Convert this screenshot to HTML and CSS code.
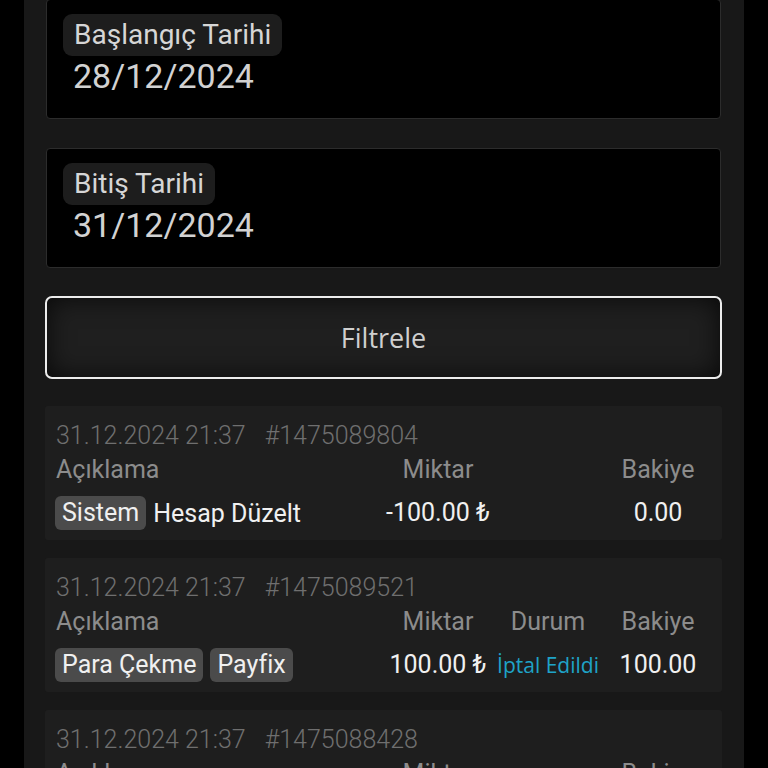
FILE: index.html
```html
<!DOCTYPE html>
<html lang="tr">
<head>
    <meta charset="UTF-8">
    <meta name="viewport" content="width=device-width, initial-scale=1.0">
    <title>Hesap Hareketleri</title>
    <link rel="stylesheet" href="styles.css">
</head>
<body>
    <div class="panel">
        <div class="date-box first">
            <span class="date-label">Başlangıç Tarihi</span>
            <div class="date-value">28/12/2024</div>
        </div>
        <div class="date-box">
            <span class="date-label">Bitiş Tarihi</span>
            <div class="date-value">31/12/2024</div>
        </div>

        <button class="filter-btn">Filtrele</button>

        <div class="tx-list">
            <div class="tx-card">
                <div class="tx-meta"><span class="tx-time">31.12.2024 21:37</span><span>#1475089804</span></div>
                <div class="tx-grid">
                    <div class="tx-head left">Açıklama</div>
                    <div class="tx-head">Miktar</div>
                    <div class="tx-head"></div>
                    <div class="tx-head">Bakiye</div>

                    <div class="tx-desc"><span class="tag">Sistem</span><span>Hesap Düzelt</span></div>
                    <div class="tx-val">-100.00 ₺</div>
                    <div class="tx-val"></div>
                    <div class="tx-val">0.00</div>
                </div>
            </div>

            <div class="tx-card">
                <div class="tx-meta"><span class="tx-time">31.12.2024 21:37</span><span>#1475089521</span></div>
                <div class="tx-grid">
                    <div class="tx-head left">Açıklama</div>
                    <div class="tx-head">Miktar</div>
                    <div class="tx-head">Durum</div>
                    <div class="tx-head">Bakiye</div>

                    <div class="tx-desc"><span class="tag">Para Çekme</span><span class="tag">Payfix</span></div>
                    <div class="tx-val">100.00 ₺</div>
                    <div class="tx-val status">İptal Edildi</div>
                    <div class="tx-val">100.00</div>
                </div>
            </div>

            <div class="tx-card">
                <div class="tx-meta"><span class="tx-time">31.12.2024 21:37</span><span>#1475088428</span></div>
                <div class="tx-grid">
                    <div class="tx-head left">Açıklama</div>
                    <div class="tx-head">Miktar</div>
                    <div class="tx-head"></div>
                    <div class="tx-head">Bakiye</div>

                    <div class="tx-desc"><span class="tag">Para Yatırma</span><span class="tag">Payfix</span></div>
                    <div class="tx-val">100.00 ₺</div>
                    <div class="tx-val"></div>
                    <div class="tx-val">100.00</div>
                </div>
            </div>
        </div>
    </div>
</body>
</html>
```

FILE: styles.css
```css
body {
    margin: 0;
    background-color: #000;
    font-family: Roboto, "Liberation Sans", sans-serif;
    color: #eee;
}

.panel {
    margin-left: 24px;
    width: 720px;
    min-height: 768px;
    box-sizing: border-box;
    padding: 0 22px 40px 21px;
    background-color: #181818;
}

/* cajas de fecha */
.date-box {
    margin: 29px 1px 0;
    padding: 14px 16px 22px;
    background-color: #000;
    border: 1px solid #2c2c2c;
    border-radius: 4px;
}
.date-box.first {
    margin-top: -1px;
}
.date-label {
    display: inline-block;
    height: 42px;
    line-height: 42px;
    padding: 0 11px;
    font-size: 28px;
    color: #d6d6d6;
    background-color: #1d1d1d;
    border-radius: 9px;
}
.date-value {
    padding-left: 10px;
    font-size: 34px;
    line-height: 40px;
    color: #d2d2d2;
}

.filter-btn {
    display: block;
    width: 100%;
    height: 83px;
    margin-top: 28px;
    font-family: "Open Sans", sans-serif;
    font-size: 27px;
    color: #cfcfcf;
    background-color: #1f1f1f;
    border: 2px solid #ececec;
    border-radius: 7px;
    box-shadow: inset 0 0 26px rgba(0, 0, 0, 0.75);
    cursor: pointer;
}

/* movimientos */
.tx-list {
    margin-top: 27px;
    display: flex;
    flex-direction: column;
    gap: 18px;
}
.tx-card {
    padding: 14px 9px 10px 10px;
    background-color: #1e1e1e;
    border-radius: 3px;
}
.tx-meta {
    font-size: 25px;
    font-weight: 300;
    line-height: 32px;
    color: #6f6f6f;
    padding-left: 1px;
}
.tx-time {
    margin-right: 19px;
}
.tx-grid {
    margin-top: 2px;
    display: grid;
    grid-template-columns: 1fr 110px 110px 110px;
    align-items: center;
}
.tx-head {
    font-size: 25px;
    line-height: 32px;
    color: #8c8c8c;
    text-align: center;
}
.tx-head.left {
    text-align: left;
    padding-left: 1px;
}
.tx-desc {
    display: flex;
    gap: 7px;
    margin-top: 10px;
    height: 34px;
    align-items: center;
    font-size: 25px;
    color: #f0f0f0;
}
.tag {
    height: 34px;
    line-height: 34px;
    padding: 0 7px;
    background-color: #4b4b4b;
    border-radius: 6px;
}
.tx-val {
    margin-top: 10px;
    height: 34px;
    line-height: 34px;
    font-size: 25px;
    color: #f0f0f0;
    text-align: center;
    white-space: nowrap;
}
.tx-val.status {
    font-family: "Open Sans", sans-serif;
    font-size: 21px;
    color: #1fa3c8;
}
```
